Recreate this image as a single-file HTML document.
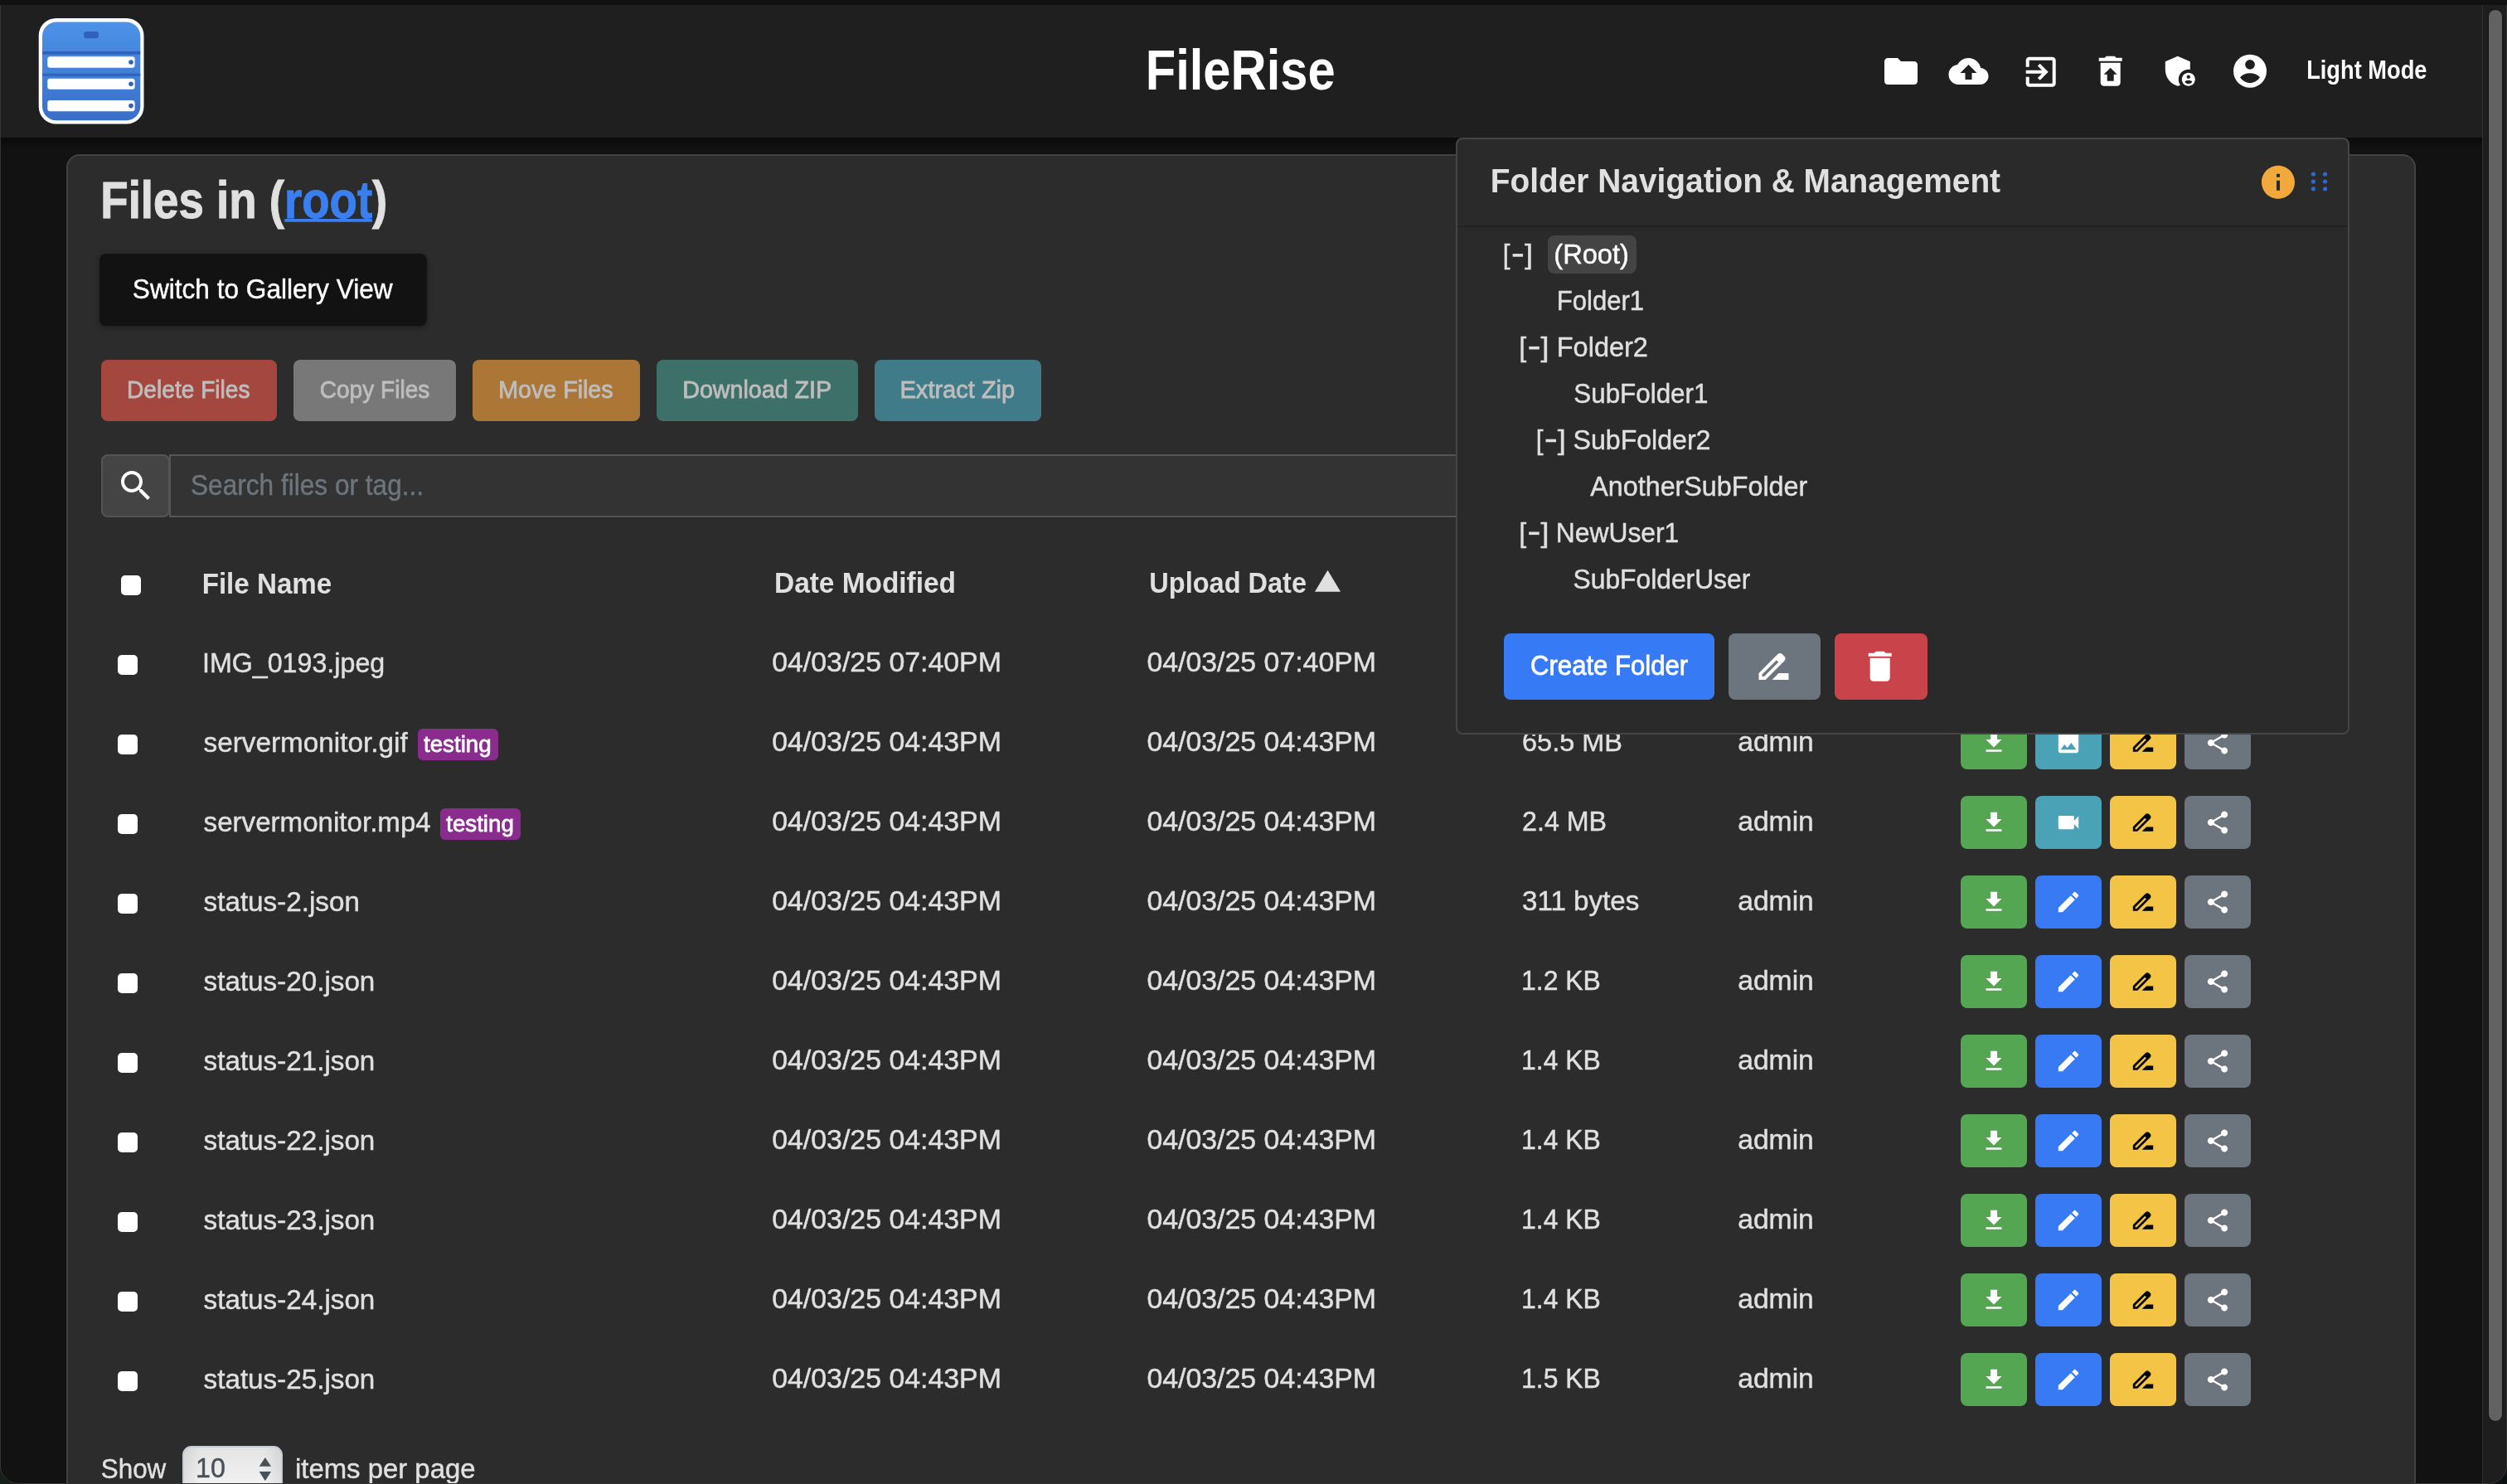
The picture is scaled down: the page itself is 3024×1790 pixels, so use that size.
<!DOCTYPE html><html><head><meta charset='utf-8'><title>FileRise</title><style>
html,body{margin:0;padding:0;}
body{width:3024px;height:1790px;overflow:hidden;position:relative;background:#121212;font-family:"Liberation Sans",sans-serif;}
svg{position:absolute;left:0;top:0;overflow:visible;will-change:transform;}
svg text{font-family:"Liberation Sans",sans-serif;}
</style></head><body>
<div style='position:absolute;left:0px;top:0px;width:3024px;height:6px;background:#111111;border-radius:0px;'></div>
<div style='position:absolute;left:0px;top:6px;width:2994px;height:160px;background:#1f1f1f;border-radius:0px;'></div>
<div style='position:absolute;left:0px;top:166px;width:2994px;height:14px;background:linear-gradient(rgba(0,0,0,0.45),rgba(0,0,0,0));border-radius:0px;'></div>
<div style='position:absolute;left:0px;top:6px;width:1px;height:1784px;background:#2a2a2a;border-radius:0px;'></div>
<div style='position:absolute;left:2994px;top:6px;width:30px;height:1784px;background:#1e1e1e;border-radius:0px;'></div>
<div style='position:absolute;left:2994px;top:6px;width:1px;height:1784px;background:#2f2f2f;border-radius:0px;'></div>
<div style='position:absolute;left:3001px;top:11px;width:18px;height:1704px;background:#161616;border-radius:9px;'></div>
<div style='position:absolute;left:3002px;top:12px;width:16px;height:1702px;background:#626262;border-radius:8px;'></div>
<svg width='3024' height='1790' style='z-index:1'>
<defs><linearGradient id='lg' x1='0' y1='0' x2='0' y2='1'><stop offset='0' stop-color='#4b92e8'/><stop offset='1' stop-color='#3a6fc8'/></linearGradient></defs>
<rect x='46.7' y='21.9' width='126.8' height='127.7' rx='21' fill='#ffffff'/>
<rect x='51' y='26.6' width='118.3' height='118.6' rx='17' fill='url(#lg)'/>
<rect x='101' y='37.9' width='18' height='8.4' rx='3.5' fill='#2f62bd'/>
<rect x='51' y='62' width='118.3' height='3.7' fill='#2f62bd'/>
<rect x='51' y='88.8' width='118.3' height='3' fill='#2f62bd'/>
<rect x='57.3' y='68.2' width='105.3' height='13.5' rx='3' fill='#ffffff'/>
<rect x='57.3' y='94.7' width='105.3' height='13.1' rx='3' fill='#ffffff'/>
<rect x='57.3' y='121' width='105.3' height='13.3' rx='3' fill='#ffffff'/>
<circle cx='158' cy='75' r='2.8' fill='#2f62bd'/><circle cx='158' cy='101.2' r='2.8' fill='#2f62bd'/><circle cx='158' cy='127.6' r='2.8' fill='#2f62bd'/>

<path transform='translate(2269.00,62.00) scale(2.0000)' d='M10 4H4c-1.1 0-1.99.9-1.99 2L2 18c0 1.1.9 2 2 2h16c1.1 0 2-.9 2-2V8c0-1.1-.9-2-2-2h-8l-2-2z' fill='#fff'/>
<path transform='translate(2350.50,62.00) scale(2.0000)' d='M19.35 10.04C18.67 6.59 15.64 4 12 4 9.11 4 6.6 5.64 5.35 8.04 2.34 8.36 0 10.91 0 14c0 3.31 2.69 6 6 6h13c2.76 0 5-2.24 5-5 0-2.64-2.05-4.78-4.65-4.96zM14 13v4h-4v-4H7l5-5 5 5h-3z' fill='#fff'/>
<path transform='translate(2437.70,62.70) scale(2.0000)' d='M10.09 15.59L11.5 17l5-5-5-5-1.41 1.41L12.67 11H3v2h9.67l-2.58 2.59zM19 3H5c-1.11 0-2 .9-2 2v4h2V5h14v14H5v-4H3v4c0 1.1.89 2 2 2h14c1.1 0 2-.9 2-2V5c0-1.1-.9-2-2-2z' fill='#fff'/>
<path transform='translate(2521.70,61.70) scale(2.0000)' d='M19 4h-3.5l-1-1h-5l-1 1H5v2h14zM6 7v12c0 1.1.9 2 2 2h8c1.1 0 2-.9 2-2V7H6zm8 7v4h-4v-4H8l4-4 4 4h-2z' fill='#fff'/>
<path transform='translate(2605.80,61.70) scale(2.0000)' d='M17 11c.34 0 .67.04 1 .09V6.27L10.5 3 3 6.27v4.91c0 4.54 3.2 8.79 7.5 9.82.55-.13 1.08-.32 1.6-.55-.69-.98-1.1-2.17-1.1-3.45 0-3.31 2.69-6 6-6zM17 13c-2.21 0-4 1.79-4 4s1.79 4 4 4 4-1.79 4-4-1.79-4-4-4zm0 1.38c.62 0 1.12.51 1.12 1.12s-.51 1.12-1.12 1.12-1.12-.51-1.12-1.12.5-1.12 1.12-1.12zm0 5.37c-.93 0-1.74-.46-2.24-1.17.05-.72 1.51-1.08 2.24-1.08s2.19.36 2.24 1.08c-.5.71-1.31 1.17-2.24 1.17z' fill='#fff'/>
<path transform='translate(2690.00,61.75) scale(2.0000)' d='M12 2A10 10 0 1 0 12 22A10 10 0 1 0 12 2ZM12 5.1A2.93 2.93 0 1 1 12 10.96A2.93 2.93 0 1 1 12 5.1ZM6 15.7C7.5 14.1 9.6 13.2 12 13.2S16.5 14.1 18 15.7C16.5 17.9 14.3 19.07 12 19.07S7.5 17.9 6 15.7Z' fill='#fff' fill-rule='evenodd'/>
<text transform='translate(1381.79,108.40) scale(0.8786,1)' style='font-size:67.9px;font-weight:700' fill='#ffffff' stroke='none'>FileRise</text>
<text transform='translate(2782.13,95.10) scale(0.8854,1)' style='font-size:30.8px;font-weight:700' fill='#ffffff' stroke='none'>Light Mode</text>
</svg>
<div style='position:absolute;left:80px;top:186px;width:2830px;height:1700px;background:#2c2c2c;border:2px solid #424242;border-radius:16px;box-sizing:border-box;width:2834px;z-index:0'></div>
<div style='position:absolute;left:0;top:0;z-index:2'>
<div style='position:absolute;left:119.8px;top:306.2px;width:394.90000000000003px;height:87.19999999999999px;background:#121212;border-radius:8px;box-shadow:0 2px 6px rgba(0,0,0,0.35);'></div>
<div style='position:absolute;left:122px;top:434px;width:212px;height:74px;background:#a3473f;border-radius:8px;'></div>
<div style='position:absolute;left:354px;top:434px;width:196px;height:74px;background:#787878;border-radius:8px;'></div>
<div style='position:absolute;left:570px;top:434px;width:202px;height:74px;background:#ab7636;border-radius:8px;'></div>
<div style='position:absolute;left:792px;top:434px;width:243px;height:74px;background:#3d7068;border-radius:8px;'></div>
<div style='position:absolute;left:1055px;top:434px;width:201px;height:74px;background:#3f7b89;border-radius:8px;'></div>
<div style='position:absolute;left:204px;top:548px;width:1700px;height:75.5px;background:#333;border:2px solid #555;box-sizing:border-box'></div>
<div style='position:absolute;left:122px;top:548px;width:82.5px;height:75.5px;background:#444;border:2px solid #555;border-radius:8px;box-sizing:border-box'></div>
<div style='position:absolute;left:145.8px;top:693.9px;width:24.299999999999983px;height:24.300000000000068px;background:#ffffff;border-radius:5px;'></div>
<div style='position:absolute;left:141.8px;top:789.6px;width:24.19999999999999px;height:24.199999999999932px;background:#ffffff;border-radius:5px;'></div>
<div style='position:absolute;left:141.8px;top:885.6px;width:24.19999999999999px;height:24.199999999999932px;background:#ffffff;border-radius:5px;'></div>
<div style='position:absolute;left:141.8px;top:981.6px;width:24.19999999999999px;height:24.199999999999932px;background:#ffffff;border-radius:5px;'></div>
<div style='position:absolute;left:141.8px;top:1077.6px;width:24.19999999999999px;height:24.200000000000045px;background:#ffffff;border-radius:5px;'></div>
<div style='position:absolute;left:141.8px;top:1173.6px;width:24.19999999999999px;height:24.200000000000045px;background:#ffffff;border-radius:5px;'></div>
<div style='position:absolute;left:141.8px;top:1269.6px;width:24.19999999999999px;height:24.200000000000045px;background:#ffffff;border-radius:5px;'></div>
<div style='position:absolute;left:141.8px;top:1365.6px;width:24.19999999999999px;height:24.200000000000045px;background:#ffffff;border-radius:5px;'></div>
<div style='position:absolute;left:141.8px;top:1461.6px;width:24.19999999999999px;height:24.200000000000045px;background:#ffffff;border-radius:5px;'></div>
<div style='position:absolute;left:141.8px;top:1557.6px;width:24.19999999999999px;height:24.200000000000045px;background:#ffffff;border-radius:5px;'></div>
<div style='position:absolute;left:141.8px;top:1653.6px;width:24.19999999999999px;height:24.200000000000045px;background:#ffffff;border-radius:5px;'></div>
<div style='position:absolute;left:504.1px;top:879px;width:96.89999999999998px;height:38px;background:#8a2b8e;border-radius:6px;'></div>
<div style='position:absolute;left:531.3px;top:975px;width:96.40000000000009px;height:37.799999999999955px;background:#8a2b8e;border-radius:6px;'></div>
<div style='position:absolute;left:2365px;top:768px;width:80px;height:64px;background:#55a653;border-radius:8px;'></div>
<div style='position:absolute;left:2455px;top:768px;width:80px;height:64px;background:#4aa2b7;border-radius:8px;'></div>
<div style='position:absolute;left:2545px;top:768px;width:80px;height:64px;background:#f3c445;border-radius:8px;'></div>
<div style='position:absolute;left:2635px;top:768px;width:80px;height:64px;background:#6c757d;border-radius:8px;'></div>
<div style='position:absolute;left:2365px;top:864px;width:80px;height:64px;background:#55a653;border-radius:8px;'></div>
<div style='position:absolute;left:2455px;top:864px;width:80px;height:64px;background:#4aa2b7;border-radius:8px;'></div>
<div style='position:absolute;left:2545px;top:864px;width:80px;height:64px;background:#f3c445;border-radius:8px;'></div>
<div style='position:absolute;left:2635px;top:864px;width:80px;height:64px;background:#6c757d;border-radius:8px;'></div>
<div style='position:absolute;left:2365px;top:960px;width:80px;height:64px;background:#55a653;border-radius:8px;'></div>
<div style='position:absolute;left:2455px;top:960px;width:80px;height:64px;background:#4aa2b7;border-radius:8px;'></div>
<div style='position:absolute;left:2545px;top:960px;width:80px;height:64px;background:#f3c445;border-radius:8px;'></div>
<div style='position:absolute;left:2635px;top:960px;width:80px;height:64px;background:#6c757d;border-radius:8px;'></div>
<div style='position:absolute;left:2365px;top:1056px;width:80px;height:64px;background:#55a653;border-radius:8px;'></div>
<div style='position:absolute;left:2455px;top:1056px;width:80px;height:64px;background:#377af4;border-radius:8px;'></div>
<div style='position:absolute;left:2545px;top:1056px;width:80px;height:64px;background:#f3c445;border-radius:8px;'></div>
<div style='position:absolute;left:2635px;top:1056px;width:80px;height:64px;background:#6c757d;border-radius:8px;'></div>
<div style='position:absolute;left:2365px;top:1152px;width:80px;height:64px;background:#55a653;border-radius:8px;'></div>
<div style='position:absolute;left:2455px;top:1152px;width:80px;height:64px;background:#377af4;border-radius:8px;'></div>
<div style='position:absolute;left:2545px;top:1152px;width:80px;height:64px;background:#f3c445;border-radius:8px;'></div>
<div style='position:absolute;left:2635px;top:1152px;width:80px;height:64px;background:#6c757d;border-radius:8px;'></div>
<div style='position:absolute;left:2365px;top:1248px;width:80px;height:64px;background:#55a653;border-radius:8px;'></div>
<div style='position:absolute;left:2455px;top:1248px;width:80px;height:64px;background:#377af4;border-radius:8px;'></div>
<div style='position:absolute;left:2545px;top:1248px;width:80px;height:64px;background:#f3c445;border-radius:8px;'></div>
<div style='position:absolute;left:2635px;top:1248px;width:80px;height:64px;background:#6c757d;border-radius:8px;'></div>
<div style='position:absolute;left:2365px;top:1344px;width:80px;height:64px;background:#55a653;border-radius:8px;'></div>
<div style='position:absolute;left:2455px;top:1344px;width:80px;height:64px;background:#377af4;border-radius:8px;'></div>
<div style='position:absolute;left:2545px;top:1344px;width:80px;height:64px;background:#f3c445;border-radius:8px;'></div>
<div style='position:absolute;left:2635px;top:1344px;width:80px;height:64px;background:#6c757d;border-radius:8px;'></div>
<div style='position:absolute;left:2365px;top:1440px;width:80px;height:64px;background:#55a653;border-radius:8px;'></div>
<div style='position:absolute;left:2455px;top:1440px;width:80px;height:64px;background:#377af4;border-radius:8px;'></div>
<div style='position:absolute;left:2545px;top:1440px;width:80px;height:64px;background:#f3c445;border-radius:8px;'></div>
<div style='position:absolute;left:2635px;top:1440px;width:80px;height:64px;background:#6c757d;border-radius:8px;'></div>
<div style='position:absolute;left:2365px;top:1536px;width:80px;height:64px;background:#55a653;border-radius:8px;'></div>
<div style='position:absolute;left:2455px;top:1536px;width:80px;height:64px;background:#377af4;border-radius:8px;'></div>
<div style='position:absolute;left:2545px;top:1536px;width:80px;height:64px;background:#f3c445;border-radius:8px;'></div>
<div style='position:absolute;left:2635px;top:1536px;width:80px;height:64px;background:#6c757d;border-radius:8px;'></div>
<div style='position:absolute;left:2365px;top:1632px;width:80px;height:64px;background:#55a653;border-radius:8px;'></div>
<div style='position:absolute;left:2455px;top:1632px;width:80px;height:64px;background:#377af4;border-radius:8px;'></div>
<div style='position:absolute;left:2545px;top:1632px;width:80px;height:64px;background:#f3c445;border-radius:8px;'></div>
<div style='position:absolute;left:2635px;top:1632px;width:80px;height:64px;background:#6c757d;border-radius:8px;'></div>
<div style='position:absolute;left:219.5px;top:1744px;width:121px;height:70px;background:linear-gradient(to right,rgba(0,0,0,0.07),rgba(0,0,0,0) 18%,rgba(0,0,0,0) 82%,rgba(0,0,0,0.07)),linear-gradient(#e4e4e4,#f8f8f8);border:2px solid #c5ccd4;border-radius:11px;box-sizing:border-box'></div>
</div>
<svg width='3024' height='1790' style='z-index:3'>
<path transform='translate(140.00,562.00) scale(2.0000)' d='M15.5 14h-.79l-.28-.27C15.41 12.59 16 11.11 16 9.5 16 5.91 13.09 3 9.5 3S3 5.910 3 9.5 5.91 16 9.5 16c1.61 0 3.09-.59 4.23-1.57l.27.28v.79l5 4.99L20.49 19l-4.99-5zm-6 0C7.01 14 5 11.99 5 9.5S7.01 5 9.5 5 14 7.01 14 9.5 11.99 14 9.5 14z' fill='#fff'/>
<rect x='343.2' y='264' width='105.7' height='3.7' fill='#3a7ff0'/>
<polygon points='1586,713.8 1617,713.8 1601.5,687.7' fill='#e0e0e0'/>
<polygon points='312.7,1768.7 327,1768.7 319.85,1758' fill='#495057'/><polygon points='312.7,1775 327,1775 319.85,1786.3' fill='#495057'/>
<path transform='translate(2388.75,783.75) scale(1.3542)' d='M19 9h-4V3H9v6H5l7 7 7-7zM5 18v2h14v-2H5z' fill='#fff'/>
<path transform='translate(2478.75,783.75) scale(1.3542)' d='M21 19V5c0-1.1-.9-2-2-2H5c-1.1 0-2 .9-2 2v14c0 1.1.9 2 2 2h14c1.1 0 2-.9 2-2zM8.5 13.5l2.5 3.01L14.5 12l4.5 6H5l3.5-4.5z' fill='#fff'/>
<path transform='translate(2568.75,783.75) scale(1.3542)' d='M18.41 5.8L17.2 4.59c-.78-.78-2.05-.78-2.830 0l-2.68 2.68L3 15.96V20h4.04l8.74-8.74 2.63-2.63c.79-.78.79-2.05 0-2.83zM6.21 18H5v-1.21l8.66-8.66 1.21 1.21L6.21 18zM11 20l4-4h6v4H11z' fill='#000'/>
<path transform='translate(2658.75,783.75) scale(1.3542)' d='M18 16.08c-.76 0-1.44.3-1.96.77L8.91 12.7c.05-.23.09-.46.09-.7s-.04-.47-.09-.7l7.05-4.11c.54.5 1.25.81 2.04.81 1.66 0 3-1.34 3-3s-1.34-3-3-3-3 1.34-3 3c0 .24.04.47.09.7L8.04 9.81C7.5 9.31 6.79 9 6 9c-1.66 0-3 1.34-3 3s1.34 3 3 3c.79 0 1.5-.31 2.04-.81l7.12 4.16c-.05.21-.08.43-.08.65 0 1.61 1.310 2.92 2.92 2.92 1.61 0 2.92-1.31 2.92-2.92s-1.31-2.92-2.92-2.92z' fill='#fff'/>
<path transform='translate(2388.75,879.75) scale(1.3542)' d='M19 9h-4V3H9v6H5l7 7 7-7zM5 18v2h14v-2H5z' fill='#fff'/>
<path transform='translate(2478.75,879.75) scale(1.3542)' d='M21 19V5c0-1.1-.9-2-2-2H5c-1.1 0-2 .9-2 2v14c0 1.1.9 2 2 2h14c1.1 0 2-.9 2-2zM8.5 13.5l2.5 3.01L14.5 12l4.5 6H5l3.5-4.5z' fill='#fff'/>
<path transform='translate(2568.75,879.75) scale(1.3542)' d='M18.41 5.8L17.2 4.59c-.78-.78-2.05-.78-2.830 0l-2.68 2.68L3 15.96V20h4.04l8.74-8.74 2.63-2.63c.79-.78.79-2.05 0-2.83zM6.21 18H5v-1.21l8.66-8.66 1.21 1.21L6.21 18zM11 20l4-4h6v4H11z' fill='#000'/>
<path transform='translate(2658.75,879.75) scale(1.3542)' d='M18 16.08c-.76 0-1.44.3-1.96.77L8.91 12.7c.05-.23.09-.46.09-.7s-.04-.47-.09-.7l7.05-4.11c.54.5 1.25.81 2.04.81 1.66 0 3-1.34 3-3s-1.34-3-3-3-3 1.34-3 3c0 .24.04.47.09.7L8.04 9.81C7.5 9.31 6.79 9 6 9c-1.66 0-3 1.34-3 3s1.34 3 3 3c.79 0 1.5-.31 2.04-.81l7.12 4.16c-.05.21-.08.43-.08.65 0 1.61 1.310 2.92 2.92 2.92 1.61 0 2.92-1.31 2.92-2.92s-1.31-2.92-2.92-2.92z' fill='#fff'/>
<path transform='translate(2388.75,975.75) scale(1.3542)' d='M19 9h-4V3H9v6H5l7 7 7-7zM5 18v2h14v-2H5z' fill='#fff'/>
<path transform='translate(2478.75,975.75) scale(1.3542)' d='M17 10.5V7c0-.55-.45-1-1-1H4c-.55 0-1 .45-1 1v10c0 .55.45 1 1 1h12c.55 0 1-.45 1-1v-3.5l4 4v-11l-4 4z' fill='#fff'/>
<path transform='translate(2568.75,975.75) scale(1.3542)' d='M18.41 5.8L17.2 4.59c-.78-.78-2.05-.78-2.830 0l-2.68 2.68L3 15.96V20h4.04l8.74-8.74 2.63-2.63c.79-.78.79-2.05 0-2.83zM6.21 18H5v-1.21l8.66-8.66 1.21 1.21L6.21 18zM11 20l4-4h6v4H11z' fill='#000'/>
<path transform='translate(2658.75,975.75) scale(1.3542)' d='M18 16.08c-.76 0-1.44.3-1.96.77L8.91 12.7c.05-.23.09-.46.09-.7s-.04-.47-.09-.7l7.05-4.11c.54.5 1.25.81 2.04.81 1.66 0 3-1.34 3-3s-1.34-3-3-3-3 1.34-3 3c0 .24.04.47.09.7L8.04 9.81C7.5 9.31 6.79 9 6 9c-1.66 0-3 1.34-3 3s1.34 3 3 3c.79 0 1.5-.31 2.04-.81l7.12 4.16c-.05.21-.08.43-.08.65 0 1.61 1.310 2.92 2.92 2.92 1.61 0 2.92-1.31 2.92-2.92s-1.31-2.92-2.92-2.92z' fill='#fff'/>
<path transform='translate(2388.75,1071.75) scale(1.3542)' d='M19 9h-4V3H9v6H5l7 7 7-7zM5 18v2h14v-2H5z' fill='#fff'/>
<path transform='translate(2478.75,1071.75) scale(1.3542)' d='M3 17.25V21h3.75L17.81 9.94l-3.75-3.75L3 17.25zM20.71 7.04c.39-.39.39-1.02 0-1.41l-2.34-2.34c-.39-.39-1.02-.39-1.41 0l-1.83 1.83 3.75 3.75 1.83-1.83z' fill='#fff'/>
<path transform='translate(2568.75,1071.75) scale(1.3542)' d='M18.41 5.8L17.2 4.59c-.78-.78-2.05-.78-2.830 0l-2.68 2.68L3 15.96V20h4.04l8.74-8.74 2.63-2.63c.79-.78.79-2.05 0-2.83zM6.21 18H5v-1.21l8.66-8.66 1.21 1.21L6.21 18zM11 20l4-4h6v4H11z' fill='#000'/>
<path transform='translate(2658.75,1071.75) scale(1.3542)' d='M18 16.08c-.76 0-1.44.3-1.96.77L8.91 12.7c.05-.23.09-.46.09-.7s-.04-.47-.09-.7l7.05-4.11c.54.5 1.25.81 2.04.81 1.66 0 3-1.34 3-3s-1.34-3-3-3-3 1.34-3 3c0 .24.04.47.09.7L8.04 9.81C7.5 9.31 6.79 9 6 9c-1.66 0-3 1.34-3 3s1.34 3 3 3c.79 0 1.5-.31 2.04-.81l7.12 4.16c-.05.21-.08.43-.08.65 0 1.61 1.310 2.92 2.92 2.92 1.61 0 2.92-1.31 2.92-2.92s-1.31-2.92-2.92-2.92z' fill='#fff'/>
<path transform='translate(2388.75,1167.75) scale(1.3542)' d='M19 9h-4V3H9v6H5l7 7 7-7zM5 18v2h14v-2H5z' fill='#fff'/>
<path transform='translate(2478.75,1167.75) scale(1.3542)' d='M3 17.25V21h3.75L17.81 9.94l-3.75-3.75L3 17.25zM20.71 7.04c.39-.39.39-1.02 0-1.41l-2.34-2.34c-.39-.39-1.02-.39-1.41 0l-1.83 1.83 3.75 3.75 1.83-1.83z' fill='#fff'/>
<path transform='translate(2568.75,1167.75) scale(1.3542)' d='M18.41 5.8L17.2 4.59c-.78-.78-2.05-.78-2.830 0l-2.68 2.68L3 15.96V20h4.04l8.74-8.74 2.63-2.63c.79-.78.79-2.05 0-2.83zM6.21 18H5v-1.21l8.66-8.66 1.21 1.21L6.21 18zM11 20l4-4h6v4H11z' fill='#000'/>
<path transform='translate(2658.75,1167.75) scale(1.3542)' d='M18 16.08c-.76 0-1.44.3-1.96.77L8.91 12.7c.05-.23.09-.46.09-.7s-.04-.47-.09-.7l7.05-4.11c.54.5 1.25.81 2.04.81 1.66 0 3-1.34 3-3s-1.34-3-3-3-3 1.34-3 3c0 .24.04.47.09.7L8.04 9.81C7.5 9.31 6.79 9 6 9c-1.66 0-3 1.34-3 3s1.34 3 3 3c.79 0 1.5-.31 2.04-.81l7.12 4.16c-.05.21-.08.43-.08.65 0 1.61 1.310 2.92 2.92 2.92 1.61 0 2.92-1.31 2.92-2.92s-1.31-2.92-2.92-2.92z' fill='#fff'/>
<path transform='translate(2388.75,1263.75) scale(1.3542)' d='M19 9h-4V3H9v6H5l7 7 7-7zM5 18v2h14v-2H5z' fill='#fff'/>
<path transform='translate(2478.75,1263.75) scale(1.3542)' d='M3 17.25V21h3.75L17.81 9.94l-3.75-3.75L3 17.25zM20.71 7.04c.39-.39.39-1.02 0-1.41l-2.34-2.34c-.39-.39-1.02-.39-1.41 0l-1.83 1.83 3.75 3.75 1.83-1.83z' fill='#fff'/>
<path transform='translate(2568.75,1263.75) scale(1.3542)' d='M18.41 5.8L17.2 4.59c-.78-.78-2.05-.78-2.830 0l-2.68 2.68L3 15.96V20h4.04l8.74-8.74 2.63-2.63c.79-.78.79-2.05 0-2.83zM6.21 18H5v-1.21l8.66-8.66 1.21 1.21L6.21 18zM11 20l4-4h6v4H11z' fill='#000'/>
<path transform='translate(2658.75,1263.75) scale(1.3542)' d='M18 16.08c-.76 0-1.44.3-1.96.77L8.91 12.7c.05-.23.09-.46.09-.7s-.04-.47-.09-.7l7.05-4.11c.54.5 1.25.81 2.04.81 1.66 0 3-1.34 3-3s-1.34-3-3-3-3 1.34-3 3c0 .24.04.47.09.7L8.04 9.81C7.5 9.31 6.79 9 6 9c-1.66 0-3 1.34-3 3s1.34 3 3 3c.79 0 1.5-.31 2.04-.81l7.12 4.16c-.05.21-.08.43-.08.65 0 1.61 1.310 2.92 2.92 2.92 1.61 0 2.92-1.31 2.92-2.92s-1.31-2.92-2.92-2.92z' fill='#fff'/>
<path transform='translate(2388.75,1359.75) scale(1.3542)' d='M19 9h-4V3H9v6H5l7 7 7-7zM5 18v2h14v-2H5z' fill='#fff'/>
<path transform='translate(2478.75,1359.75) scale(1.3542)' d='M3 17.25V21h3.75L17.81 9.94l-3.75-3.75L3 17.25zM20.71 7.04c.39-.39.39-1.02 0-1.41l-2.34-2.34c-.39-.39-1.02-.39-1.41 0l-1.83 1.83 3.75 3.75 1.83-1.83z' fill='#fff'/>
<path transform='translate(2568.75,1359.75) scale(1.3542)' d='M18.41 5.8L17.2 4.59c-.78-.78-2.05-.78-2.830 0l-2.68 2.68L3 15.96V20h4.04l8.74-8.74 2.63-2.63c.79-.78.79-2.05 0-2.83zM6.21 18H5v-1.21l8.66-8.66 1.21 1.21L6.21 18zM11 20l4-4h6v4H11z' fill='#000'/>
<path transform='translate(2658.75,1359.75) scale(1.3542)' d='M18 16.08c-.76 0-1.44.3-1.96.77L8.91 12.7c.05-.23.09-.46.09-.7s-.04-.47-.09-.7l7.05-4.11c.54.5 1.25.81 2.04.81 1.66 0 3-1.34 3-3s-1.34-3-3-3-3 1.34-3 3c0 .24.04.47.09.7L8.04 9.81C7.5 9.31 6.79 9 6 9c-1.66 0-3 1.34-3 3s1.34 3 3 3c.79 0 1.5-.31 2.04-.81l7.12 4.16c-.05.21-.08.43-.08.65 0 1.61 1.310 2.92 2.92 2.92 1.61 0 2.92-1.31 2.92-2.92s-1.31-2.92-2.92-2.92z' fill='#fff'/>
<path transform='translate(2388.75,1455.75) scale(1.3542)' d='M19 9h-4V3H9v6H5l7 7 7-7zM5 18v2h14v-2H5z' fill='#fff'/>
<path transform='translate(2478.75,1455.75) scale(1.3542)' d='M3 17.25V21h3.75L17.81 9.94l-3.75-3.75L3 17.25zM20.71 7.04c.39-.39.39-1.02 0-1.41l-2.34-2.34c-.39-.39-1.02-.39-1.41 0l-1.83 1.83 3.75 3.75 1.83-1.83z' fill='#fff'/>
<path transform='translate(2568.75,1455.75) scale(1.3542)' d='M18.41 5.8L17.2 4.59c-.78-.78-2.05-.78-2.830 0l-2.68 2.68L3 15.96V20h4.04l8.74-8.74 2.63-2.63c.79-.78.79-2.05 0-2.83zM6.21 18H5v-1.21l8.66-8.66 1.21 1.21L6.21 18zM11 20l4-4h6v4H11z' fill='#000'/>
<path transform='translate(2658.75,1455.75) scale(1.3542)' d='M18 16.08c-.76 0-1.44.3-1.96.77L8.91 12.7c.05-.23.09-.46.09-.7s-.04-.47-.09-.7l7.05-4.11c.54.5 1.25.81 2.04.81 1.66 0 3-1.34 3-3s-1.34-3-3-3-3 1.34-3 3c0 .24.04.47.09.7L8.04 9.81C7.5 9.31 6.79 9 6 9c-1.66 0-3 1.34-3 3s1.34 3 3 3c.79 0 1.5-.31 2.04-.81l7.12 4.16c-.05.21-.08.43-.08.65 0 1.61 1.310 2.92 2.92 2.92 1.61 0 2.92-1.31 2.92-2.92s-1.31-2.92-2.92-2.92z' fill='#fff'/>
<path transform='translate(2388.75,1551.75) scale(1.3542)' d='M19 9h-4V3H9v6H5l7 7 7-7zM5 18v2h14v-2H5z' fill='#fff'/>
<path transform='translate(2478.75,1551.75) scale(1.3542)' d='M3 17.25V21h3.75L17.81 9.94l-3.75-3.75L3 17.25zM20.71 7.04c.39-.39.39-1.02 0-1.41l-2.34-2.34c-.39-.39-1.02-.39-1.41 0l-1.83 1.83 3.75 3.75 1.83-1.83z' fill='#fff'/>
<path transform='translate(2568.75,1551.75) scale(1.3542)' d='M18.41 5.8L17.2 4.59c-.78-.78-2.05-.78-2.830 0l-2.68 2.68L3 15.96V20h4.04l8.74-8.74 2.63-2.63c.79-.78.79-2.05 0-2.83zM6.21 18H5v-1.21l8.66-8.66 1.21 1.21L6.21 18zM11 20l4-4h6v4H11z' fill='#000'/>
<path transform='translate(2658.75,1551.75) scale(1.3542)' d='M18 16.08c-.76 0-1.44.3-1.96.77L8.91 12.7c.05-.23.09-.46.09-.7s-.04-.47-.09-.7l7.05-4.11c.54.5 1.25.81 2.04.81 1.66 0 3-1.34 3-3s-1.34-3-3-3-3 1.34-3 3c0 .24.04.47.09.7L8.04 9.81C7.5 9.31 6.79 9 6 9c-1.66 0-3 1.34-3 3s1.34 3 3 3c.79 0 1.5-.31 2.04-.81l7.12 4.16c-.05.21-.08.43-.08.65 0 1.61 1.310 2.92 2.92 2.92 1.61 0 2.92-1.31 2.92-2.92s-1.31-2.92-2.92-2.92z' fill='#fff'/>
<path transform='translate(2388.75,1647.75) scale(1.3542)' d='M19 9h-4V3H9v6H5l7 7 7-7zM5 18v2h14v-2H5z' fill='#fff'/>
<path transform='translate(2478.75,1647.75) scale(1.3542)' d='M3 17.25V21h3.75L17.81 9.94l-3.75-3.75L3 17.25zM20.71 7.04c.39-.39.39-1.02 0-1.41l-2.34-2.34c-.39-.39-1.02-.39-1.41 0l-1.83 1.83 3.75 3.75 1.83-1.83z' fill='#fff'/>
<path transform='translate(2568.75,1647.75) scale(1.3542)' d='M18.41 5.8L17.2 4.59c-.78-.78-2.05-.78-2.830 0l-2.68 2.68L3 15.96V20h4.04l8.74-8.74 2.63-2.63c.79-.78.79-2.05 0-2.83zM6.21 18H5v-1.21l8.66-8.66 1.21 1.21L6.21 18zM11 20l4-4h6v4H11z' fill='#000'/>
<path transform='translate(2658.75,1647.75) scale(1.3542)' d='M18 16.08c-.76 0-1.44.3-1.96.77L8.91 12.7c.05-.23.09-.46.09-.7s-.04-.47-.09-.7l7.05-4.11c.54.5 1.25.81 2.04.81 1.66 0 3-1.34 3-3s-1.34-3-3-3-3 1.34-3 3c0 .24.04.47.09.7L8.04 9.81C7.5 9.31 6.79 9 6 9c-1.66 0-3 1.34-3 3s1.34 3 3 3c.79 0 1.5-.31 2.04-.81l7.12 4.16c-.05.21-.08.43-.08.65 0 1.61 1.310 2.92 2.92 2.92 1.61 0 2.92-1.31 2.92-2.92s-1.31-2.92-2.92-2.92z' fill='#fff'/>
<text transform='translate(121.29,262.70) scale(0.8785,1)' style='font-size:62.2px;font-weight:700' fill='#e0e0e0' stroke='none'><tspan fill='#e0e0e0' stroke='#e0e0e0'>Files in (</tspan><tspan fill='#3a7ff0' stroke='#3a7ff0'>root</tspan><tspan fill='#e0e0e0' stroke='#e0e0e0'>)</tspan></text>
<text transform='translate(159.86,360.00) scale(0.9404,1)' style='font-size:33.61px;font-weight:400;stroke-width:0.45px' fill='#ffffff' stroke='#ffffff'>Switch to Gallery View</text>
<text transform='translate(153.07,480.00) scale(0.9651,1)' style='font-size:29.15px;font-weight:400;stroke-width:0.8px' fill='#bdbdbd' stroke='#bdbdbd'>Delete Files</text>
<text transform='translate(385.74,480.00) scale(0.9627,1)' style='font-size:29.15px;font-weight:400;stroke-width:0.8px' fill='#bdbdbd' stroke='#bdbdbd'>Copy Files</text>
<text transform='translate(601.24,480.00) scale(0.9819,1)' style='font-size:29.15px;font-weight:400;stroke-width:0.8px' fill='#bdbdbd' stroke='#bdbdbd'>Move Files</text>
<text transform='translate(823.23,480.00) scale(0.9828,1)' style='font-size:29.15px;font-weight:400;stroke-width:0.8px' fill='#bdbdbd' stroke='#bdbdbd'>Download ZIP</text>
<text transform='translate(1085.51,480.00) scale(0.9960,1)' style='font-size:29.15px;font-weight:400;stroke-width:0.8px' fill='#bdbdbd' stroke='#bdbdbd'>Extract Zip</text>
<text transform='translate(229.98,597.30) scale(0.9215,1)' style='font-size:34.31px;font-weight:400;stroke-width:0.45px' fill='#6c757d' stroke='#6c757d'>Search files or tag...</text>
<text transform='translate(243.67,715.50) scale(0.9640,1)' style='font-size:34.4px;font-weight:700' fill='#e0e0e0' stroke='none'>File Name</text>
<text transform='translate(934.06,714.80) scale(0.9713,1)' style='font-size:34.4px;font-weight:700' fill='#e0e0e0' stroke='none'>Date Modified</text>
<text transform='translate(1386.31,714.80) scale(0.9453,1)' style='font-size:34.4px;font-weight:700' fill='#e0e0e0' stroke='none'>Upload Date</text>
<text transform='translate(243.94,810.80) scale(0.9531,1)' style='font-size:33.81px;font-weight:400;stroke-width:0.45px' fill='#e0e0e0' stroke='#e0e0e0'>IMG_0193.jpeg</text>
<text transform='translate(931.20,810.40) scale(1.0016,1)' style='font-size:33.81px;font-weight:400;stroke-width:0.45px' fill='#e0e0e0' stroke='#e0e0e0'>04/03/25 07:40PM</text>
<text transform='translate(1383.40,810.40) scale(1.0012,1)' style='font-size:33.81px;font-weight:400;stroke-width:0.45px' fill='#e0e0e0' stroke='#e0e0e0'>04/03/25 07:40PM</text>
<text transform='translate(245.60,906.80) scale(0.9847,1)' style='font-size:33.81px;font-weight:400;stroke-width:0.45px' fill='#e0e0e0' stroke='#e0e0e0'>servermonitor.gif</text>
<text transform='translate(931.20,906.40) scale(1.0016,1)' style='font-size:33.81px;font-weight:400;stroke-width:0.45px' fill='#e0e0e0' stroke='#e0e0e0'>04/03/25 04:43PM</text>
<text transform='translate(1383.40,906.40) scale(1.0012,1)' style='font-size:33.81px;font-weight:400;stroke-width:0.45px' fill='#e0e0e0' stroke='#e0e0e0'>04/03/25 04:43PM</text>
<text transform='translate(1836.04,906.40) scale(0.9601,1)' style='font-size:33.81px;font-weight:400;stroke-width:0.45px' fill='#e0e0e0' stroke='#e0e0e0'>65.5 MB</text>
<text transform='translate(2096.21,906.40) scale(0.9949,1)' style='font-size:33.81px;font-weight:400;stroke-width:0.45px' fill='#e0e0e0' stroke='#e0e0e0'>admin</text>
<text transform='translate(245.60,1002.80) scale(0.9797,1)' style='font-size:33.81px;font-weight:400;stroke-width:0.45px' fill='#e0e0e0' stroke='#e0e0e0'>servermonitor.mp4</text>
<text transform='translate(931.20,1002.40) scale(1.0016,1)' style='font-size:33.81px;font-weight:400;stroke-width:0.45px' fill='#e0e0e0' stroke='#e0e0e0'>04/03/25 04:43PM</text>
<text transform='translate(1383.40,1002.40) scale(1.0012,1)' style='font-size:33.81px;font-weight:400;stroke-width:0.45px' fill='#e0e0e0' stroke='#e0e0e0'>04/03/25 04:43PM</text>
<text transform='translate(1836.05,1002.40) scale(0.9529,1)' style='font-size:33.81px;font-weight:400;stroke-width:0.45px' fill='#e0e0e0' stroke='#e0e0e0'>2.4 MB</text>
<text transform='translate(2096.21,1002.40) scale(0.9949,1)' style='font-size:33.81px;font-weight:400;stroke-width:0.45px' fill='#e0e0e0' stroke='#e0e0e0'>admin</text>
<text transform='translate(245.60,1098.80) scale(0.9827,1)' style='font-size:33.81px;font-weight:400;stroke-width:0.45px' fill='#e0e0e0' stroke='#e0e0e0'>status-2.json</text>
<text transform='translate(931.20,1098.40) scale(1.0016,1)' style='font-size:33.81px;font-weight:400;stroke-width:0.45px' fill='#e0e0e0' stroke='#e0e0e0'>04/03/25 04:43PM</text>
<text transform='translate(1383.40,1098.40) scale(1.0012,1)' style='font-size:33.81px;font-weight:400;stroke-width:0.45px' fill='#e0e0e0' stroke='#e0e0e0'>04/03/25 04:43PM</text>
<text transform='translate(1836.02,1098.40) scale(0.9814,1)' style='font-size:33.81px;font-weight:400;stroke-width:0.45px' fill='#e0e0e0' stroke='#e0e0e0'>311 bytes</text>
<text transform='translate(2096.21,1098.40) scale(0.9949,1)' style='font-size:33.81px;font-weight:400;stroke-width:0.45px' fill='#e0e0e0' stroke='#e0e0e0'>admin</text>
<text transform='translate(245.60,1194.80) scale(0.9827,1)' style='font-size:33.81px;font-weight:400;stroke-width:0.45px' fill='#e0e0e0' stroke='#e0e0e0'>status-20.json</text>
<text transform='translate(931.20,1194.40) scale(1.0016,1)' style='font-size:33.81px;font-weight:400;stroke-width:0.45px' fill='#e0e0e0' stroke='#e0e0e0'>04/03/25 04:43PM</text>
<text transform='translate(1383.40,1194.40) scale(1.0012,1)' style='font-size:33.81px;font-weight:400;stroke-width:0.45px' fill='#e0e0e0' stroke='#e0e0e0'>04/03/25 04:43PM</text>
<text transform='translate(1835.11,1194.40) scale(0.9437,1)' style='font-size:33.81px;font-weight:400;stroke-width:0.45px' fill='#e0e0e0' stroke='#e0e0e0'>1.2 KB</text>
<text transform='translate(2096.21,1194.40) scale(0.9949,1)' style='font-size:33.81px;font-weight:400;stroke-width:0.45px' fill='#e0e0e0' stroke='#e0e0e0'>admin</text>
<text transform='translate(245.60,1290.80) scale(0.9827,1)' style='font-size:33.81px;font-weight:400;stroke-width:0.45px' fill='#e0e0e0' stroke='#e0e0e0'>status-21.json</text>
<text transform='translate(931.20,1290.40) scale(1.0016,1)' style='font-size:33.81px;font-weight:400;stroke-width:0.45px' fill='#e0e0e0' stroke='#e0e0e0'>04/03/25 04:43PM</text>
<text transform='translate(1383.40,1290.40) scale(1.0012,1)' style='font-size:33.81px;font-weight:400;stroke-width:0.45px' fill='#e0e0e0' stroke='#e0e0e0'>04/03/25 04:43PM</text>
<text transform='translate(1835.11,1290.40) scale(0.9437,1)' style='font-size:33.81px;font-weight:400;stroke-width:0.45px' fill='#e0e0e0' stroke='#e0e0e0'>1.4 KB</text>
<text transform='translate(2096.21,1290.40) scale(0.9949,1)' style='font-size:33.81px;font-weight:400;stroke-width:0.45px' fill='#e0e0e0' stroke='#e0e0e0'>admin</text>
<text transform='translate(245.60,1386.80) scale(0.9827,1)' style='font-size:33.81px;font-weight:400;stroke-width:0.45px' fill='#e0e0e0' stroke='#e0e0e0'>status-22.json</text>
<text transform='translate(931.20,1386.40) scale(1.0016,1)' style='font-size:33.81px;font-weight:400;stroke-width:0.45px' fill='#e0e0e0' stroke='#e0e0e0'>04/03/25 04:43PM</text>
<text transform='translate(1383.40,1386.40) scale(1.0012,1)' style='font-size:33.81px;font-weight:400;stroke-width:0.45px' fill='#e0e0e0' stroke='#e0e0e0'>04/03/25 04:43PM</text>
<text transform='translate(1835.11,1386.40) scale(0.9437,1)' style='font-size:33.81px;font-weight:400;stroke-width:0.45px' fill='#e0e0e0' stroke='#e0e0e0'>1.4 KB</text>
<text transform='translate(2096.21,1386.40) scale(0.9949,1)' style='font-size:33.81px;font-weight:400;stroke-width:0.45px' fill='#e0e0e0' stroke='#e0e0e0'>admin</text>
<text transform='translate(245.60,1482.80) scale(0.9827,1)' style='font-size:33.81px;font-weight:400;stroke-width:0.45px' fill='#e0e0e0' stroke='#e0e0e0'>status-23.json</text>
<text transform='translate(931.20,1482.40) scale(1.0016,1)' style='font-size:33.81px;font-weight:400;stroke-width:0.45px' fill='#e0e0e0' stroke='#e0e0e0'>04/03/25 04:43PM</text>
<text transform='translate(1383.40,1482.40) scale(1.0012,1)' style='font-size:33.81px;font-weight:400;stroke-width:0.45px' fill='#e0e0e0' stroke='#e0e0e0'>04/03/25 04:43PM</text>
<text transform='translate(1835.11,1482.40) scale(0.9437,1)' style='font-size:33.81px;font-weight:400;stroke-width:0.45px' fill='#e0e0e0' stroke='#e0e0e0'>1.4 KB</text>
<text transform='translate(2096.21,1482.40) scale(0.9949,1)' style='font-size:33.81px;font-weight:400;stroke-width:0.45px' fill='#e0e0e0' stroke='#e0e0e0'>admin</text>
<text transform='translate(245.60,1578.80) scale(0.9827,1)' style='font-size:33.81px;font-weight:400;stroke-width:0.45px' fill='#e0e0e0' stroke='#e0e0e0'>status-24.json</text>
<text transform='translate(931.20,1578.40) scale(1.0016,1)' style='font-size:33.81px;font-weight:400;stroke-width:0.45px' fill='#e0e0e0' stroke='#e0e0e0'>04/03/25 04:43PM</text>
<text transform='translate(1383.40,1578.40) scale(1.0012,1)' style='font-size:33.81px;font-weight:400;stroke-width:0.45px' fill='#e0e0e0' stroke='#e0e0e0'>04/03/25 04:43PM</text>
<text transform='translate(1835.11,1578.40) scale(0.9437,1)' style='font-size:33.81px;font-weight:400;stroke-width:0.45px' fill='#e0e0e0' stroke='#e0e0e0'>1.4 KB</text>
<text transform='translate(2096.21,1578.40) scale(0.9949,1)' style='font-size:33.81px;font-weight:400;stroke-width:0.45px' fill='#e0e0e0' stroke='#e0e0e0'>admin</text>
<text transform='translate(245.60,1674.80) scale(0.9827,1)' style='font-size:33.81px;font-weight:400;stroke-width:0.45px' fill='#e0e0e0' stroke='#e0e0e0'>status-25.json</text>
<text transform='translate(931.20,1674.40) scale(1.0016,1)' style='font-size:33.81px;font-weight:400;stroke-width:0.45px' fill='#e0e0e0' stroke='#e0e0e0'>04/03/25 04:43PM</text>
<text transform='translate(1383.40,1674.40) scale(1.0012,1)' style='font-size:33.81px;font-weight:400;stroke-width:0.45px' fill='#e0e0e0' stroke='#e0e0e0'>04/03/25 04:43PM</text>
<text transform='translate(1835.11,1674.40) scale(0.9437,1)' style='font-size:33.81px;font-weight:400;stroke-width:0.45px' fill='#e0e0e0' stroke='#e0e0e0'>1.5 KB</text>
<text transform='translate(2096.21,1674.40) scale(0.9949,1)' style='font-size:33.81px;font-weight:400;stroke-width:0.45px' fill='#e0e0e0' stroke='#e0e0e0'>admin</text>
<text transform='translate(511.00,907.10) scale(1.0141,1)' style='font-size:27.32px;font-weight:400;stroke-width:0.75px' fill='#ffffff' stroke='#ffffff'>testing</text>
<text transform='translate(538.20,1003.10) scale(1.0141,1)' style='font-size:27.32px;font-weight:400;stroke-width:0.75px' fill='#ffffff' stroke='#ffffff'>testing</text>
<text transform='translate(121.77,1782.60) scale(0.9332,1)' style='font-size:33.61px;font-weight:400;stroke-width:0.45px' fill='#e0e0e0' stroke='#e0e0e0'>Show</text>
<text transform='translate(236.08,1782.40) scale(0.9599,1)' style='font-size:33.61px;font-weight:400;stroke-width:0.45px' fill='#495057' stroke='#495057'>10</text>
<text transform='translate(355.94,1782.60) scale(0.9789,1)' style='font-size:33.61px;font-weight:400;stroke-width:0.45px' fill='#e0e0e0' stroke='#e0e0e0'>items per page</text>
</svg>
<div style='position:absolute;left:1756px;top:166px;width:1078px;height:720px;background:#2a2a2a;border:2px solid #454545;border-radius:8px;box-sizing:border-box;z-index:4'>
</div>
<div style='position:absolute;left:0;top:0;z-index:5'>
<div style='position:absolute;left:1758px;top:271.6px;width:1074px;height:2.0px;background:#222222;border-radius:0px;'></div>
<div style='position:absolute;left:1866.9px;top:284px;width:107.0px;height:45.69999999999999px;background:#444444;border-radius:8px;'></div>
<div style='position:absolute;left:1814.2px;top:764px;width:254.10000000000014px;height:79.70000000000005px;background:#377af5;border-radius:8px;'></div>
<div style='position:absolute;left:2084.7px;top:764px;width:111.80000000000018px;height:79.70000000000005px;background:#6c757d;border-radius:8px;'></div>
<div style='position:absolute;left:2212.7px;top:764px;width:112.10000000000036px;height:79.70000000000005px;background:#c9434b;border-radius:8px;'></div>
</div>
<svg width='3024' height='1790' style='z-index:6'>
<path transform='translate(2724.00,195.80) scale(2.0000)' d='M12 2C6.48 2 2 6.48 2 12s4.48 10 10 10 10-4.48 10-10S17.52 2 12 2zm1 15h-2v-6h2v6zm0-8h-2V7h2v2z' fill='#f2a93b'/>
<circle cx='2790.4' cy='210' r='2.6' fill='#3366cc'/>
<circle cx='2790.4' cy='219' r='2.6' fill='#3366cc'/>
<circle cx='2790.4' cy='227.8' r='2.6' fill='#3366cc'/>
<circle cx='2804.6' cy='210' r='2.6' fill='#3366cc'/>
<circle cx='2804.6' cy='219' r='2.6' fill='#3366cc'/>
<circle cx='2804.6' cy='227.8' r='2.6' fill='#3366cc'/>
<path transform='translate(2115.50,780.00) scale(2.0000)' d='M18.41 5.8L17.2 4.59c-.78-.78-2.05-.78-2.830 0l-2.68 2.68L3 15.96V20h4.04l8.74-8.74 2.63-2.63c.79-.78.79-2.05 0-2.83zM6.21 18H5v-1.21l8.66-8.66 1.21 1.21L6.21 18zM11 20l4-4h6v4H11z' fill='#fff'/>
<path transform='translate(2243.70,779.70) scale(2.0000)' d='M6 19c0 1.1.9 2 2 2h8c1.1 0 2-.9 2-2V7H6v12zM19 4h-3.5l-1-1h-5l-1 1H5v2h14V4z' fill='#fff'/>
<text transform='translate(1797.70,232.00) scale(0.9481,1)' style='font-size:41.0px;font-weight:700' fill='#e0e0e0' stroke='none'>Folder Navigation &amp; Management</text>
<text transform='translate(1812.85,318.30) scale(0.9250,1)' style='font-size:33.81px;font-weight:400;stroke-width:0.45px' fill='#e0e0e0' stroke='#e0e0e0'>[</text>
<text transform='translate(1838.90,318.30) scale(1.0571,1)' style='font-size:33.81px;font-weight:400;stroke-width:0.45px' fill='#e0e0e0' stroke='#e0e0e0'>]</text>
<text transform='translate(1874.27,318.30) scale(0.9653,1)' style='font-size:33.81px;font-weight:400;stroke-width:0.45px' fill='#ffffff' stroke='#ffffff'>(Root)</text>
<text transform='translate(1877.86,374.20) scale(0.9177,1)' style='font-size:33.81px;font-weight:400;stroke-width:0.45px' fill='#e0e0e0' stroke='#e0e0e0'>Folder1</text>
<text transform='translate(1832.55,430.10) scale(0.9250,1)' style='font-size:33.81px;font-weight:400;stroke-width:0.45px' fill='#e0e0e0' stroke='#e0e0e0'>[</text>
<text transform='translate(1858.60,430.10) scale(1.0571,1)' style='font-size:33.81px;font-weight:400;stroke-width:0.45px' fill='#e0e0e0' stroke='#e0e0e0'>]</text>
<text transform='translate(1877.78,430.10) scale(0.9607,1)' style='font-size:33.81px;font-weight:400;stroke-width:0.45px' fill='#e0e0e0' stroke='#e0e0e0'>Folder2</text>
<text transform='translate(1898.27,486.00) scale(0.9281,1)' style='font-size:33.81px;font-weight:400;stroke-width:0.45px' fill='#e0e0e0' stroke='#e0e0e0'>SubFolder1</text>
<text transform='translate(1852.75,541.90) scale(0.9250,1)' style='font-size:33.81px;font-weight:400;stroke-width:0.45px' fill='#e0e0e0' stroke='#e0e0e0'>[</text>
<text transform='translate(1878.80,541.90) scale(1.0571,1)' style='font-size:33.81px;font-weight:400;stroke-width:0.45px' fill='#e0e0e0' stroke='#e0e0e0'>]</text>
<text transform='translate(1897.55,541.90) scale(0.9495,1)' style='font-size:33.81px;font-weight:400;stroke-width:0.45px' fill='#e0e0e0' stroke='#e0e0e0'>SubFolder2</text>
<text transform='translate(1918.30,597.80) scale(0.9549,1)' style='font-size:33.81px;font-weight:400;stroke-width:0.45px' fill='#e0e0e0' stroke='#e0e0e0'>AnotherSubFolder</text>
<text transform='translate(1832.45,653.70) scale(0.9250,1)' style='font-size:33.81px;font-weight:400;stroke-width:0.45px' fill='#e0e0e0' stroke='#e0e0e0'>[</text>
<text transform='translate(1858.50,653.70) scale(1.0571,1)' style='font-size:33.81px;font-weight:400;stroke-width:0.45px' fill='#e0e0e0' stroke='#e0e0e0'>]</text>
<text transform='translate(1876.82,653.70) scale(0.9408,1)' style='font-size:33.81px;font-weight:400;stroke-width:0.45px' fill='#e0e0e0' stroke='#e0e0e0'>NewUser1</text>
<text transform='translate(1897.56,709.60) scale(0.9401,1)' style='font-size:33.81px;font-weight:400;stroke-width:0.45px' fill='#e0e0e0' stroke='#e0e0e0'>SubFolderUser</text>
<text transform='translate(1846.08,814.20) scale(0.9185,1)' style='font-size:33.85px;font-weight:400;stroke-width:0.8px' fill='#ffffff' stroke='#ffffff'>Create Folder</text>
<rect x='1824.60' y='306.10' width='12.5' height='3.6' fill='#e0e0e0'/>
<rect x='1844.30' y='417.90' width='12.5' height='3.6' fill='#e0e0e0'/>
<rect x='1864.50' y='529.70' width='12.5' height='3.6' fill='#e0e0e0'/>
<rect x='1844.20' y='641.50' width='12.5' height='3.6' fill='#e0e0e0'/>
</svg>
<svg width='3024' height='1790' style='z-index:9'><path d='M0 1768 L0 1790 L22 1790 A22 22 0 0 1 0 1768 Z' fill='#16201a'/><path d='M3024 1768 L3024 1790 L3002 1790 A22 22 0 0 0 3024 1768 Z' fill='#0c1010'/><path d='M3023.5 6 V1768 A21.5 21.5 0 0 1 3002 1789.5 H22 A21.5 21.5 0 0 1 0.5 1768 V6' fill='none' stroke='#343434' stroke-width='1'/></svg>
</body></html>
